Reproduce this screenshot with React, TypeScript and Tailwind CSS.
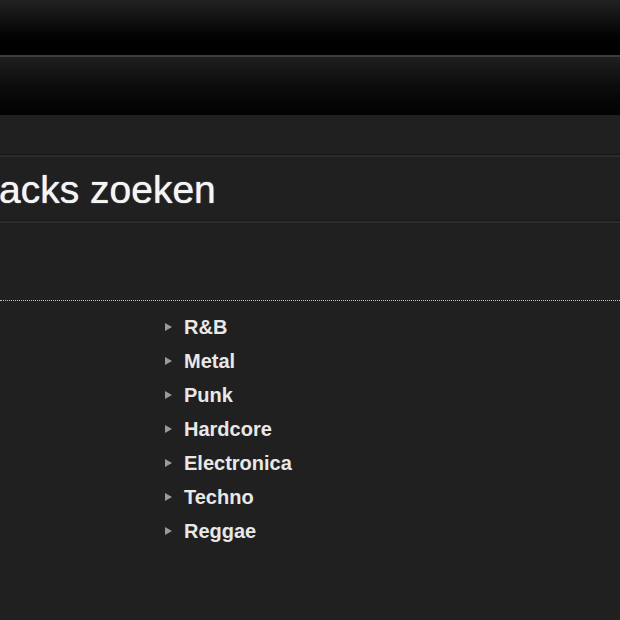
import React from "react";

const genres = ["R&B", "Metal", "Punk", "Hardcore", "Electronica", "Techno", "Reggae"];

export default function App() {
  return (
    <div className="w-[620px] h-[620px] overflow-hidden bg-[#202020]" style={{ fontFamily: '"Liberation Sans", Arial, sans-serif' }}>
      <div className="h-[55px] bg-gradient-to-b from-[#222222] via-[#0a0a0a] to-[#000000]" />
      <div className="h-[2px] bg-[#3d3d3d]" />
      <div className="h-[58px] bg-gradient-to-b from-[#1f1f1f] via-[#0c0c0c] to-[#030303]" />
      <div className="h-[39px]" />
      <div className="h-[1px] bg-[#171717]" />
      <div className="h-[2px] bg-[#2c2c2c]" />
      <div className="h-[63px] flex items-center">
        <h1 className="text-[39px] leading-none text-[#f4f4f4] ml-[-1px] mt-[2px] [text-shadow:0_0_1px_#ffffff]">acks zoeken</h1>
      </div>
      <div className="h-[1px] bg-[#171717]" />
      <div className="h-[2px] bg-[#2c2c2c]" />
      <div className="h-[77px]" />
      <div className="border-t border-dotted border-[#c0c0c0]" />
      <ul className="mt-[9px] ml-[165px]">
        {genres.map((g) => (
          <li key={g} className="flex items-center h-[34px]">
            <span className="w-0 h-0 border-y-[4px] border-y-transparent border-l-[7px] border-l-[#9a9a9a] mr-[12px]" />
            <span className="text-[20px] font-bold text-[#e8e8e8]">{g}</span>
          </li>
        ))}
      </ul>
    </div>
  );
}
